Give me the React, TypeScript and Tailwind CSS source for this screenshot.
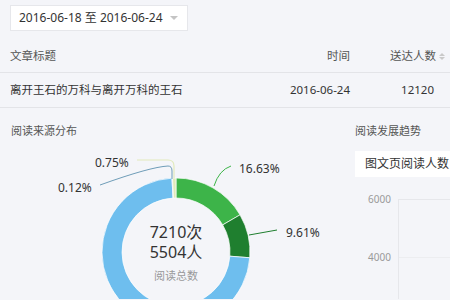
const CX = 176;
const CY = 113;
const R_OUT = 74;
const R_IN = 54;

const segments = [
  { value: 16.63, color: "#3db449" },
  { value: 9.61, color: "#1f7f2f" },
  { value: 72.89, color: "#6ebeee" },
  { value: 0.12, color: "#6f9db8" },
  { value: 0.75, color: "#e1eabb" },
];

function pt(r: number, deg: number) {
  const a = (deg * Math.PI) / 180;
  return [CX + r * Math.sin(a), CY - r * Math.cos(a)];
}

function arcPath(a0: number, a1: number) {
  const large = a1 - a0 > 180 ? 1 : 0;
  const [x0, y0] = pt(R_OUT, a0);
  const [x1, y1] = pt(R_OUT, a1);
  const [x2, y2] = pt(R_IN, a1);
  const [x3, y3] = pt(R_IN, a0);
  return `M${x0},${y0} A${R_OUT},${R_OUT} 0 ${large} 1 ${x1},${y1} L${x2},${y2} A${R_IN},${R_IN} 0 ${large} 0 ${x3},${y3} Z`;
}

function Donut() {
  let acc = 0;
  const arcs = segments.map((s) => {
    const a0 = (acc / 100) * 360;
    acc += s.value;
    const a1 = (acc / 100) * 360;
    return { ...s, a0, a1 };
  });

  return (
    <svg width="355" height="160" className="block">
      {arcs.map((a, i) => (
        <path key={i} d={arcPath(a.a0, a.a1)} fill={a.color} stroke="#ffffff" strokeWidth="0.7" />
      ))}

      {/* leader lines */}
      <path d="M214,47 Q219,31 231,27" fill="none" stroke="#3db449" strokeWidth="1" />
      <path d="M249,96 L277,91" fill="none" stroke="#1f7f2f" strokeWidth="1" />
      <path d="M100,46 Q150,28 168,27 Q172,27 172,32 L172,40" fill="none" stroke="#6f9db8" strokeWidth="1" />
      <path d="M137,21 L168,21 Q174,21 174,27 L174,39" fill="none" stroke="#e1eabb" strokeWidth="1.2" />

      <g fontSize="12" fill="#333333">
        <text x="239" y="34">16.63%</text>
        <text x="286" y="98">9.61%</text>
        <text x="95" y="28">0.75%</text>
        <text x="58" y="53">0.12%</text>
      </g>

      <g textAnchor="middle">
        <text x={CX} y="99" fontSize="16" fill="#333333">7210次</text>
        <text x={CX} y="119" fontSize="16" fill="#333333">5504人</text>
        <text x={CX} y="141" fontSize="11" fill="#999999">阅读总数</text>
      </g>
    </svg>
  );
}

function SortIcon() {
  return (
    <span className="ml-[3px] flex flex-col gap-[1px]">
      <span className="w-0 h-0 border-x-[3.5px] border-x-transparent border-b-[3.5px] border-b-[#c9c9c9]" />
      <span className="w-0 h-0 border-x-[3.5px] border-x-transparent border-t-[3.5px] border-t-[#c9c9c9]" />
    </span>
  );
}

export default function App() {
  return (
    <div className="w-[450px] h-[300px] overflow-hidden bg-[#f4f5f9] font-['Noto_Sans','Noto_Sans_CJK_SC',sans-serif] text-[#333]">
      <div className="pt-[5px] pl-[10px]">
        <div className="w-[178px] h-[26px] bg-white border border-[#e6e7eb] flex items-center justify-between pl-[8px] pr-[9px]">
          <span className="text-[12px] leading-none">2016-06-18 至 2016-06-24</span>
          <span className="w-0 h-0 border-x-[4px] border-x-transparent border-t-[4px] border-t-[#c4c4c4]" />
        </div>
      </div>

      <div className="mt-[9px] text-[11.5px]">
        <div className="grid grid-cols-[260px_90px_100px] h-[33px] items-center border-b border-[#e3e4e8] text-[#555]">
          <span className="pl-[10px]">文章标题</span>
          <span className="text-right">时间</span>
          <span className="flex items-center justify-end pr-[5px]">
            送达人数
            <SortIcon />
          </span>
        </div>
        <div className="grid grid-cols-[260px_90px_100px] h-[35px] items-center border-b border-[#e3e4e8]">
          <span className="pl-[10px]">离开王石的万科与离开万科的王石</span>
          <span className="text-right">2016-06-24</span>
          <span className="text-right pr-[16px]">12120</span>
        </div>
      </div>

      <div className="flex">
        <div className="w-[355px] flex-none">
          <div className="mt-[15px] h-[16px] leading-[16px] pl-[11px] text-[11px] text-[#555]">阅读来源分布</div>
          <Donut />
        </div>

        <div className="w-[95px] flex-none">
          <div className="mt-[15px] h-[16px] leading-[16px] text-[11px] text-[#555]">阅读发展趋势</div>
          <div className="mt-[12px] h-[26px] w-[120px] bg-white flex items-center pl-[10px] text-[12px] whitespace-nowrap">
            图文页阅读人数
          </div>
          <div className="flex h-[122px]">
            <div className="w-[43px] flex-none flex flex-col items-end pr-[7px] text-[10px] leading-[14px] text-[#9a9a9a]">
              <span className="mt-[15px]">6000</span>
              <span className="mt-[44px]">4000</span>
            </div>
            <div className="flex-1 mt-[22px] border-l border-t border-[#e6e7eb]">
              <div className="mt-[57px] border-t border-[#ecedf0]" />
            </div>
          </div>
        </div>
      </div>
    </div>
  );
}
